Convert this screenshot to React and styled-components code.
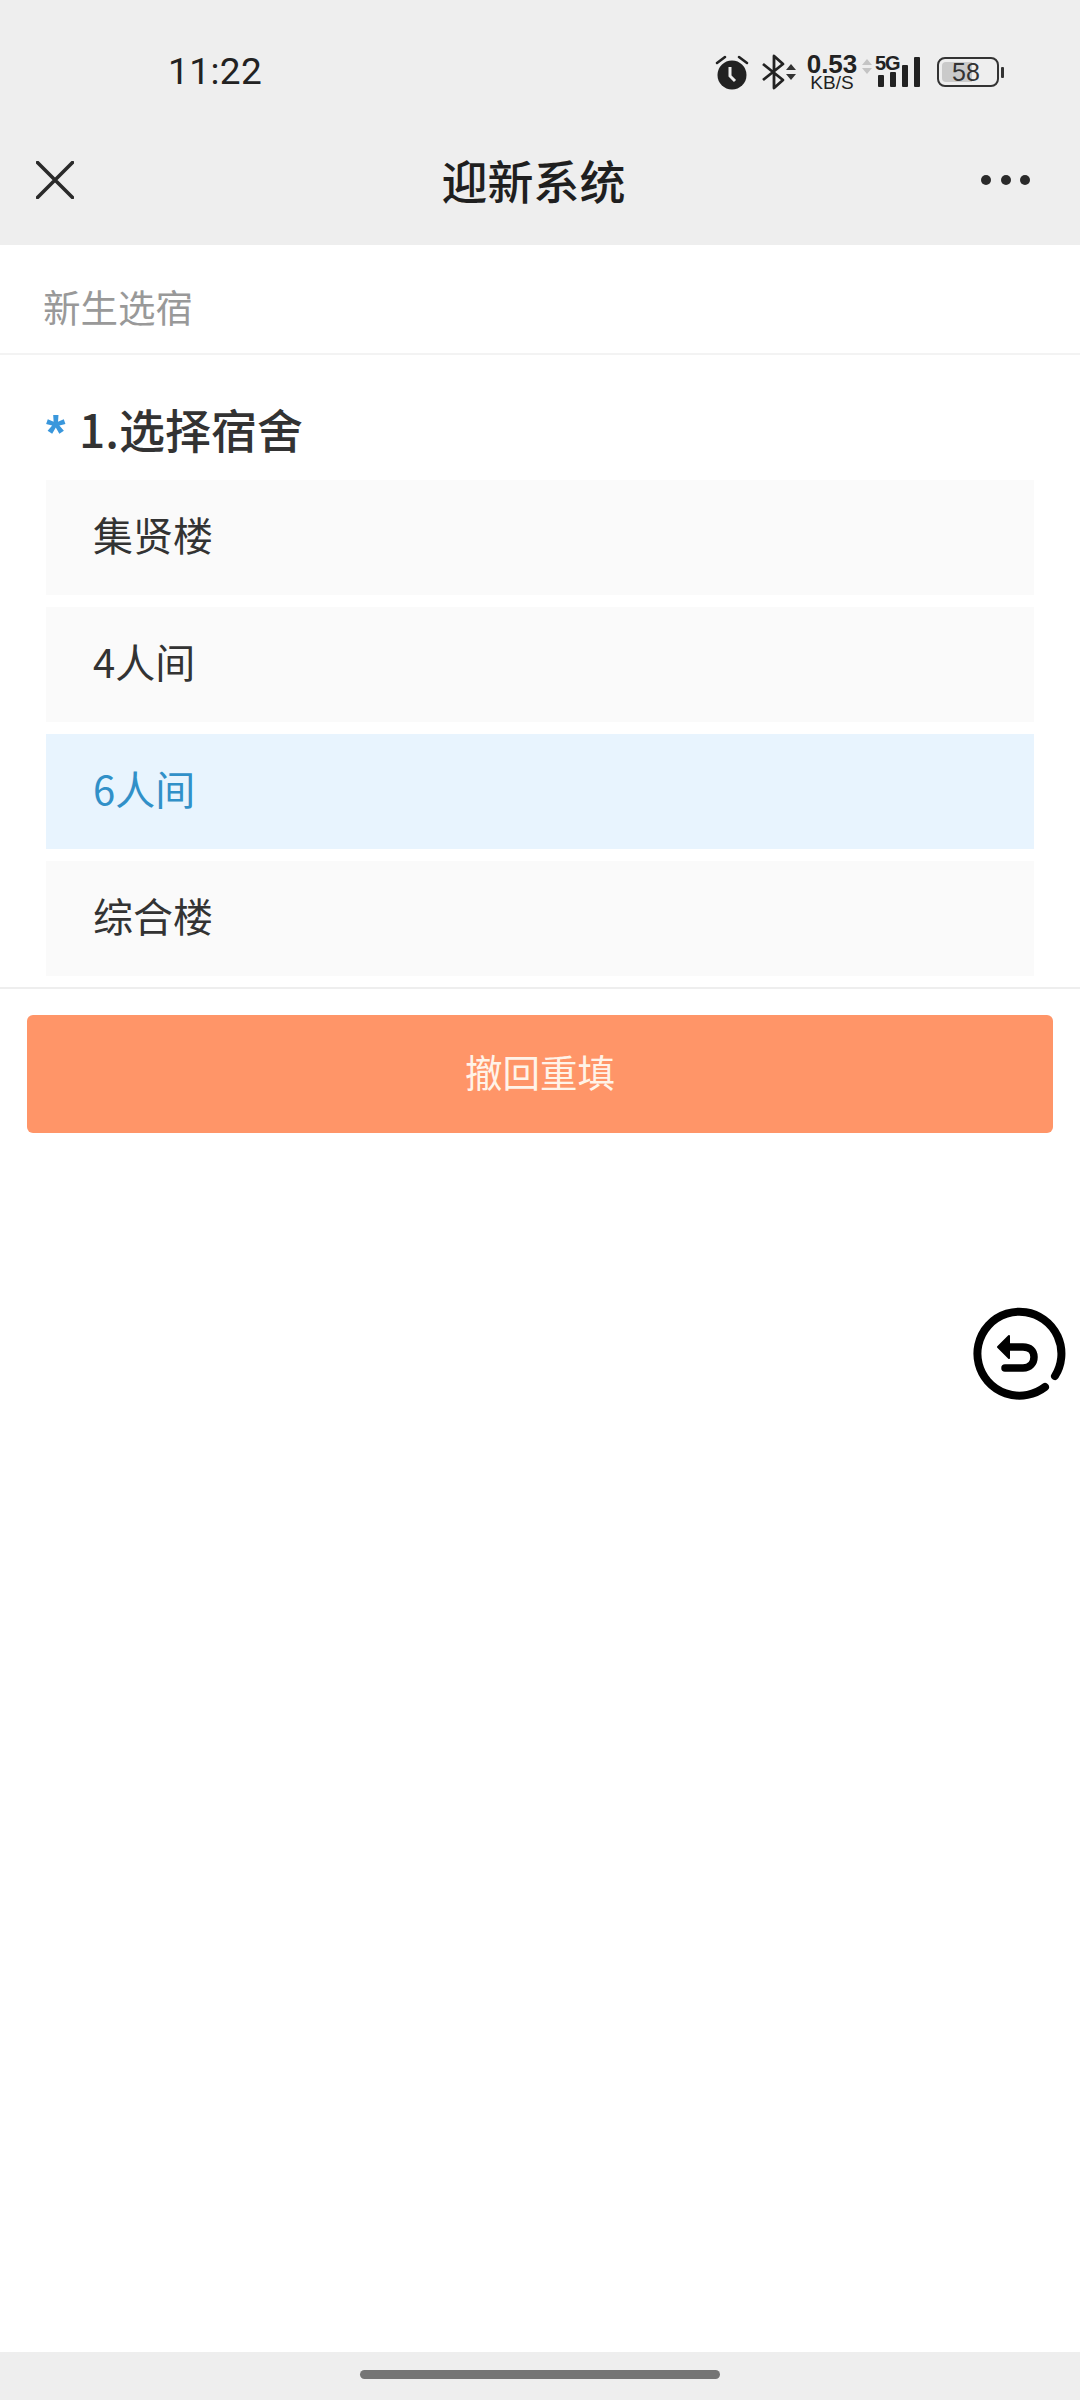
import React from "react";
import styled, { createGlobalStyle } from "styled-components";

const GlobalStyle = createGlobalStyle`
  html, body {
    margin: 0;
    padding: 0;
    background: #fff;
  }
`;

const Page = styled.div`
  position: relative;
  width: 1080px;
  height: 2400px;
  display: flex;
  flex-direction: column;
  overflow: hidden;
  font-family: "Noto Sans CJK SC", "Noto Sans", sans-serif;
  color: #333;
`;

const StatusBar = styled.div`
  height: 86px;
  padding: 29px 76px 0 168px;
  background: #eeeeee;
  display: flex;
  align-items: center;
  justify-content: space-between;
`;

const Clock = styled.span`
  font-family: Roboto, sans-serif;
  font-size: 37px;
  line-height: 44px;
  color: #222;
  letter-spacing: 0.4px;
`;

const StatusIcons = styled.div`
  display: flex;
  align-items: center;
  color: #222;
`;

const Speed = styled.div`
  width: 56px;
  margin: 0 1px 0 8px;
  display: flex;
  flex-direction: column;
  align-items: center;
  font-family: "Liberation Sans", sans-serif;
`;

const SpeedValue = styled.span`
  font-size: 26px;
  line-height: 21px;
  font-weight: 700;
`;

const SpeedUnit = styled.span`
  font-size: 19px;
  line-height: 15px;
`;

const Signal = styled.div`
  position: relative;
  width: 46px;
  height: 34px;
  margin-left: 2px;
`;

const SignalLabel = styled.span`
  position: absolute;
  left: 0;
  top: -2px;
  font-family: "Liberation Sans", sans-serif;
  font-size: 20px;
  line-height: 20px;
  font-weight: 700;
  letter-spacing: -1px;
`;

const Battery = styled.div`
  position: relative;
  width: 62px;
  height: 30px;
  margin-left: 16px;
  padding: 3px;
  box-sizing: border-box;
  border: 2.5px solid #333;
  border-radius: 8px;
  display: flex;
`;

const BatteryLevel = styled.div`
  width: 58%;
  background: #cacaca;
  border-radius: 4px 0 0 4px;
`;

const BatteryText = styled.span`
  position: absolute;
  left: 0;
  width: 54px;
  text-align: center;
  font-family: "Liberation Sans", sans-serif;
  font-size: 25px;
  line-height: 21px;
  color: #333;
`;

const BatteryTip = styled.div`
  width: 3px;
  height: 11px;
  margin-left: 2px;
  background: #333;
  border-radius: 1px;
`;

const NavBar = styled.div`
  height: 130px;
  padding: 0 50px 0 36px;
  background: #eeeeee;
  display: flex;
  align-items: center;
  justify-content: space-between;
`;

const CloseButton = styled.div`
  width: 50px;
  display: flex;
`;

const NavTitle = styled.div`
  font-size: 46px;
  line-height: 60px;
  padding-bottom: 3px;
  font-weight: 500;
  color: #1f1f1f;
`;

const Dots = styled.div`
  width: 49px;
  display: flex;
  justify-content: space-between;
`;

const Dot = styled.span`
  width: 10px;
  height: 10px;
  border-radius: 50%;
  background: #2a2a2a;
`;

const SubHeader = styled.div`
  height: 110px;
  box-sizing: border-box;
  padding: 12px 0 0 43px;
  border-bottom: 2px solid #f3f3f3;
  display: flex;
  align-items: center;
  font-size: 37.5px;
  color: #999;
`;

const Question = styled.div`
  padding: 46px 46px 11px;
  border-bottom: 2px solid #eeeeee;
`;

const QuestionTitle = styled.div`
  display: flex;
  align-items: center;
  height: 60px;
  box-sizing: border-box;
  padding-bottom: 6px;
  margin-bottom: 19px;
  font-size: 46px;
  font-weight: 500;
  color: #333;
`;

const Required = styled.span`
  width: 33px;
  font-family: "Liberation Sans", sans-serif;
  font-size: 50px;
  font-weight: 700;
  line-height: 50px;
  color: #3a97dc;
  padding-top: 10px;
`;

const Options = styled.div`
  display: flex;
  flex-direction: column;
  gap: 12px;
`;

const Option = styled.div`
  height: 115px;
  box-sizing: border-box;
  padding: 0 0 8px 47px;
  display: flex;
  align-items: center;
  font-size: 40px;
  background: ${(p) => (p.$selected ? "#e8f4fe" : "#fafafa")};
  color: ${(p) => (p.$selected ? "#3190c8" : "#333")};
`;

const WithdrawButton = styled.div`
  height: 118px;
  box-sizing: border-box;
  padding-bottom: 8px;
  margin: 26px 27px 0;
  border-radius: 6px;
  background: #ff9568;
  display: flex;
  align-items: center;
  justify-content: center;
  font-size: 37.5px;
  color: #fff3e8;
`;

const FloatingBack = styled.div`
  position: absolute;
  top: 1304px;
  left: 969px;
  width: 100px;
  height: 100px;
`;

const HomeBar = styled.div`
  margin-top: auto;
  height: 48px;
  background: #eeeeee;
  display: flex;
  justify-content: center;
  padding-top: 18px;
  box-sizing: border-box;
`;

const HomePill = styled.div`
  width: 360px;
  height: 9px;
  border-radius: 5px;
  background: #757575;
`;

const AlarmIcon = () => (
  <svg width="34" height="36" viewBox="0 0 34 36">
    <circle cx="17" cy="21" r="14.5" fill="#222" />
    <path d="M2 9l8-6M32 9l-8-6" stroke="#222" strokeWidth="2.6" strokeLinecap="round" />
    <path d="M15 13v9l5 5" stroke="#eee" strokeWidth="3" fill="none" />
  </svg>
);

const BluetoothIcon = () => (
  <svg width="34" height="36" viewBox="0 0 34 36" style={{ marginLeft: 13 }}>
    <path d="M1 10l20 16-9 8V2l9 8L1 26" fill="none" stroke="#222" strokeWidth="2.8" strokeLinejoin="round" />
    <path d="M24 16l5-6 5 6zM24 20l5 6 5-6z" fill="#333" />
  </svg>
);

const TransferIcon = () => (
  <svg width="12" height="36" viewBox="0 0 12 36">
    <path d="M1 11l5-6 5 6zM1 14l5 6 5-6z" fill="#c4c4c4" />
  </svg>
);

const SignalBars = () => (
  <svg width="46" height="34" viewBox="0 0 46 34">
    <rect x="3" y="20" width="6" height="12" rx="1" fill="#222" />
    <rect x="15" y="17" width="6" height="15" rx="1" fill="#222" />
    <rect x="27" y="10" width="6" height="22" rx="1" fill="#222" />
    <rect x="39" y="2" width="6" height="30" rx="1" fill="#222" />
  </svg>
);

const CloseIcon = () => (
  <svg width="38" height="38" viewBox="0 0 38 38">
    <path d="M1.5 1.5l35 35M36.5 1.5l-35 35" stroke="#2a2a2a" strokeWidth="3.6" strokeLinecap="round" />
  </svg>
);

const BackIcon = () => (
  <svg width="100" height="100" viewBox="0 0 100 100">
    <path
      d="M76 83A42 42 0 1 1 86 72"
      fill="none"
      stroke="#000"
      strokeWidth="8"
      strokeLinecap="round"
    />
    <path
      d="M36 64H54C61 64 65 59 65 53C65 47 61 43 54 43H36"
      fill="none"
      stroke="#000"
      strokeWidth="7.5"
      strokeLinecap="round"
    />
    <path d="M40 32L29 43L40 54Z" fill="#000" stroke="#000" strokeWidth="2" strokeLinejoin="round" />
  </svg>
);

const rooms = [
  { label: "集贤楼" },
  { label: "4人间" },
  { label: "6人间", selected: true },
  { label: "综合楼" },
];

const App = () => {
  return (
    <Page>
      <GlobalStyle />
      <StatusBar>
        <Clock>11:22</Clock>
        <StatusIcons>
          <AlarmIcon />
          <BluetoothIcon />
          <Speed>
            <SpeedValue>0.53</SpeedValue>
            <SpeedUnit>KB/S</SpeedUnit>
          </Speed>
          <TransferIcon />
          <Signal>
            <SignalBars />
            <SignalLabel>5G</SignalLabel>
          </Signal>
          <Battery>
            <BatteryLevel />
            <BatteryText>58</BatteryText>
          </Battery>
          <BatteryTip />
        </StatusIcons>
      </StatusBar>

      <NavBar>
        <CloseButton>
          <CloseIcon />
        </CloseButton>
        <NavTitle>迎新系统</NavTitle>
        <Dots>
          <Dot />
          <Dot />
          <Dot />
        </Dots>
      </NavBar>

      <SubHeader>新生选宿</SubHeader>

      <Question>
        <QuestionTitle>
          <Required>*</Required>
          1.选择宿舍
        </QuestionTitle>
        <Options>
          {rooms.map((room) => (
            <Option key={room.label} $selected={room.selected}>
              {room.label}
            </Option>
          ))}
        </Options>
      </Question>

      <WithdrawButton>撤回重填</WithdrawButton>

      <FloatingBack>
        <BackIcon />
      </FloatingBack>

      <HomeBar>
        <HomePill />
      </HomeBar>
    </Page>
  );
};

export default App;
